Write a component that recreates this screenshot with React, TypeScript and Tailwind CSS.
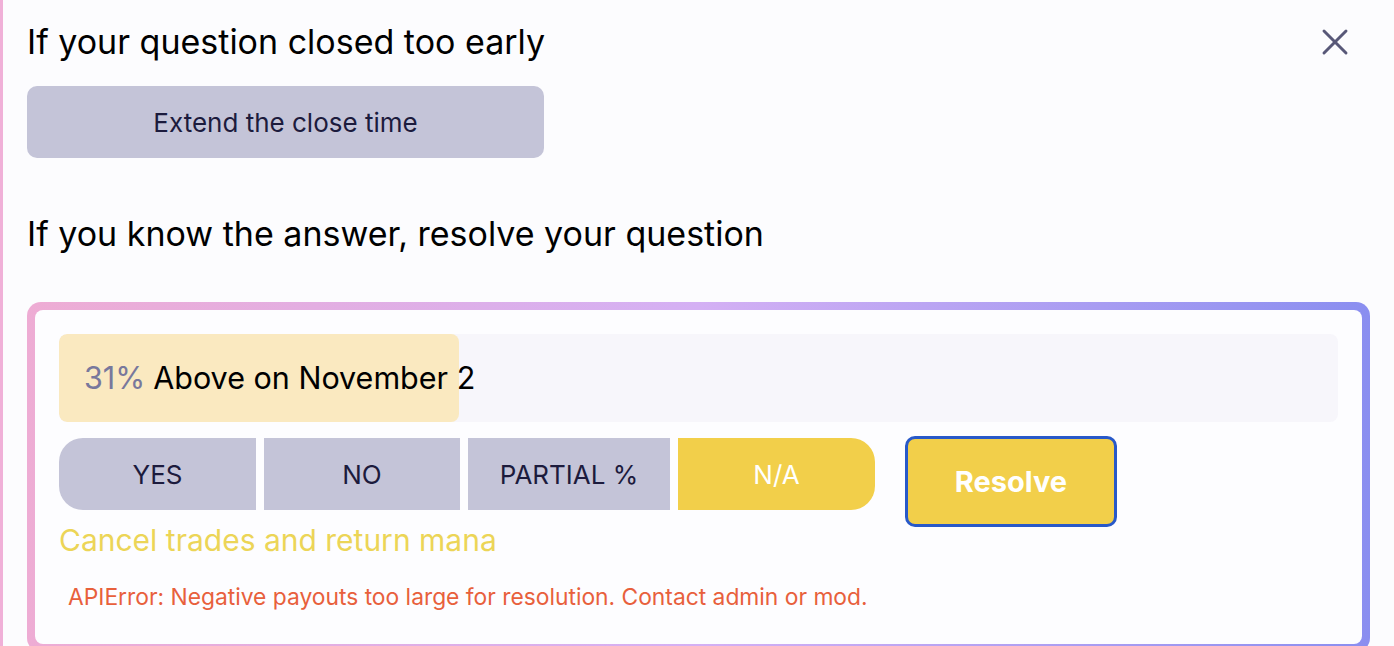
import { X } from "lucide-react";

const options = [
  { label: "YES", w: "w-[197px] rounded-l-[24px]" },
  { label: "NO", w: "w-[196px]" },
  { label: "PARTIAL %", w: "w-[202px]" },
  { label: "N/A", w: "w-[197px] rounded-r-[24px]" },
];

export default function App() {
  const selected = "N/A";

  return (
    <div className="flex min-h-screen w-full bg-[#fcfcfe] font-['Inter',sans-serif] text-black">
      <div className="w-[3px] shrink-0 bg-[#f0b0d8]" />
      <div className="flex-1 px-6 pt-[22px]">
        <div className="flex h-10 items-center justify-between">
          <h2 className="text-[34px] leading-[40px]">If your question closed too early</h2>
          <button className="mr-[13px] text-[#585878]">
            <X size={44} strokeWidth={1.6} />
          </button>
        </div>

        <button className="mt-6 h-[72px] w-[517px] rounded-[10px] bg-[#c4c4d8] text-[26px] text-[#1c1b3d]">
          Extend the close time
        </button>

        <h2 className="mt-[56px] text-[34px] leading-[40px]">
          If you know the answer, resolve your question
        </h2>

        <div className="mt-12 rounded-[14px] bg-gradient-to-r from-[#eeacd4] via-[#d4b0f4] to-[#8a8ef0] p-2">
          <div className="rounded-[8px] bg-[#fdfdff] px-6 pb-[30px] pt-6">
            <div className="relative h-[88px] overflow-hidden rounded-lg bg-[#f7f6fb]">
              <div className="absolute inset-y-0 left-0 w-[400px] rounded-lg bg-[#fae9c0]" />
              <div className="relative flex h-full items-center px-[25px] text-[30.5px]">
                <span className="text-[#78789c]">31%</span>
                <span className="ml-2">Above on November 2</span>
              </div>
            </div>

            <div className="mt-4 flex items-start gap-[30px]">
              <div>
                <div className="flex gap-2">
                  {options.map((o) => (
                    <button
                      key={o.label}
                      className={
                        "h-[72px] text-[26px] " +
                        o.w +
                        (o.label === selected ? " bg-[#f2cf4a] text-white" : " bg-[#c4c4d8] text-[#1c1b3d]")
                      }
                    >
                      {o.label}
                    </button>
                  ))}
                </div>
                <div className="mt-[12px] text-[30px] leading-[36px] text-[#ecd557]">
                  Cancel trades and return mana
                </div>
              </div>
              <button className="-mt-[2px] h-[91px] w-[212px] rounded-[10px] border-[3px] border-[#2859c9] bg-[#f2cf4a] text-[29px] font-bold text-white">
                Resolve
              </button>
            </div>

            <div className="mt-[22px] pl-[9px] text-[22.8px] text-[#e8603c]">
              APIError: Negative payouts too large for resolution. Contact admin or mod.
            </div>
          </div>
        </div>
      </div>
    </div>
  );
}
